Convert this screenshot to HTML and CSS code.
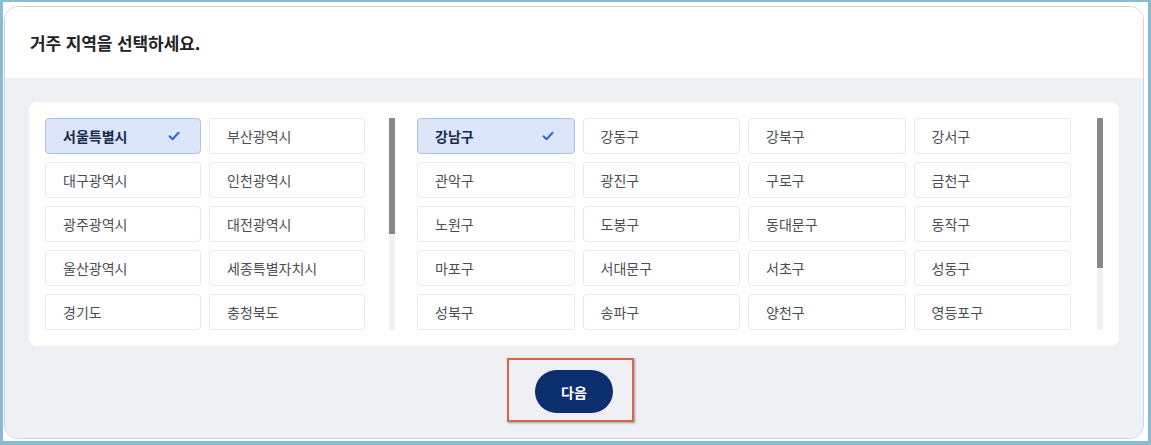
FILE: index.html
```html
<!DOCTYPE html>
<html lang="ko">
<head>
<meta charset="utf-8">
<title>거주 지역 선택</title>
<link rel="stylesheet" href="styles.css">
</head>
<body>
<div class="frame">
  <div class="card">
    <div class="card-header">
      <h1 class="title">거주 지역을 선택하세요.</h1>
    </div>
    <div class="card-body">
      <div class="panel">
        <div class="list list-sido">
          <div class="viewport">
            <div class="grid grid-2">
              <button class="opt selected">서울특별시<svg class="check" viewBox="0 0 12 10" width="12" height="10"><path d="M1.5 5.2 L4.6 8.2 L10.5 1.8" fill="none" stroke="#2a6bd4" stroke-width="2" stroke-linecap="round" stroke-linejoin="round"/></svg></button>
              <button class="opt">부산광역시</button>
              <button class="opt">대구광역시</button>
              <button class="opt">인천광역시</button>
              <button class="opt">광주광역시</button>
              <button class="opt">대전광역시</button>
              <button class="opt">울산광역시</button>
              <button class="opt">세종특별자치시</button>
              <button class="opt">경기도</button>
              <button class="opt">충청북도</button>
            </div>
          </div>
          <div class="scrollbar"><div class="thumb" style="height:116px"></div></div>
        </div>
        <div class="list list-gu">
          <div class="viewport">
            <div class="grid grid-4">
              <button class="opt selected">강남구<svg class="check" viewBox="0 0 12 10" width="12" height="10"><path d="M1.5 5.2 L4.6 8.2 L10.5 1.8" fill="none" stroke="#2a6bd4" stroke-width="2" stroke-linecap="round" stroke-linejoin="round"/></svg></button>
              <button class="opt">강동구</button>
              <button class="opt">강북구</button>
              <button class="opt">강서구</button>
              <button class="opt">관악구</button>
              <button class="opt">광진구</button>
              <button class="opt">구로구</button>
              <button class="opt">금천구</button>
              <button class="opt">노원구</button>
              <button class="opt">도봉구</button>
              <button class="opt">동대문구</button>
              <button class="opt">동작구</button>
              <button class="opt">마포구</button>
              <button class="opt">서대문구</button>
              <button class="opt">서초구</button>
              <button class="opt">성동구</button>
              <button class="opt">성북구</button>
              <button class="opt">송파구</button>
              <button class="opt">양천구</button>
              <button class="opt">영등포구</button>
            </div>
          </div>
          <div class="scrollbar"><div class="thumb" style="height:150px"></div></div>
        </div>
      </div>
      <div class="footer">
        <div class="next-wrap">
          <button class="next">다음</button>
          <span class="highlight"></span>
        </div>
      </div>
    </div>
  </div>
</div>
</body>
</html>
```
FILE: styles.css
```css
* { box-sizing: border-box; }

html, body {
  margin: 0;
  padding: 0;
}

body {
  width: 1151px;
  height: 445px;
  background: #89bcd2;
  font-family: "Noto Sans CJK KR", "Noto Sans", sans-serif;
  overflow: hidden;
}

.frame {
  margin: 2px 3px 4px 3px;
  height: 439px;
  background: #ffffff;
  padding: 4px 4px 2px 1px;
}

.card {
  height: 433px;
  border: 1px solid #c6d3e4;
  border-radius: 14px;
  overflow: hidden;
  display: flex;
  flex-direction: column;
}

.card-header {
  height: 71px;
  background: #ffffff;
  display: flex;
  align-items: center;
  padding-left: 25px;
  padding-bottom: 1px;
}

.title {
  margin: 0;
  font-size: 17px;
  font-weight: 600;
  color: #1f2329;
  letter-spacing: -0.1px;
}

.card-body {
  flex: 1;
  background: #eff0f4;
  padding: 24px 24px 0 24px;
}

.panel {
  background: #ffffff;
  border-radius: 8px;
  padding: 16px;
  display: flex;
  gap: 22px;
}

.list {
  display: flex;
  height: 212px;
}

.list-sido {
  width: 350px;
  gap: 24px;
}

.list-gu {
  flex: 1;
  gap: 26px;
}

.viewport {
  flex: 1;
  height: 212px;
  overflow: hidden;
}

.scrollbar {
  width: 6px;
  height: 212px;
  background: #f1f1f1;
  flex: none;
}

.thumb {
  width: 6px;
  background: #888888;
}

.grid {
  display: grid;
  gap: 8px;
}
.grid-2 { grid-template-columns: repeat(2, 1fr); }
.grid-4 { grid-template-columns: repeat(4, 1fr); }

.opt {
  height: 36px;
  margin: 0;
  border: 1px solid #e6e8eb;
  border-radius: 4px;
  background: #ffffff;
  color: #4a4f57;
  font-family: inherit;
  font-size: 14px;
  font-weight: 400;
  text-align: left;
  padding: 0 20px 0 17px;
  display: flex;
  align-items: center;
  justify-content: space-between;
  cursor: pointer;
}

.opt.selected {
  background: #dbe6fb;
  border-color: #aec3e3;
  color: #1b2b4b;
  font-weight: 700;
}

.check {
  display: block;
  flex: none;
}

.footer {
  display: flex;
  justify-content: center;
  padding-top: 24px;
}

.next-wrap {
  position: relative;
  display: inline-flex;
}

.next {
  width: 78px;
  height: 43px;
  border: none;
  border-radius: 22px;
  background: #0b2f6e;
  color: #ffffff;
  font-family: inherit;
  font-size: 14px;
  font-weight: 700;
  cursor: pointer;
}

.highlight {
  position: absolute;
  left: -28px;
  top: -12px;
  width: 127px;
  height: 64px;
  border: 2px solid #d8664a;
  box-shadow: 1px 1px 2px rgba(0, 0, 0, 0.35);
  pointer-events: none;
}
```
